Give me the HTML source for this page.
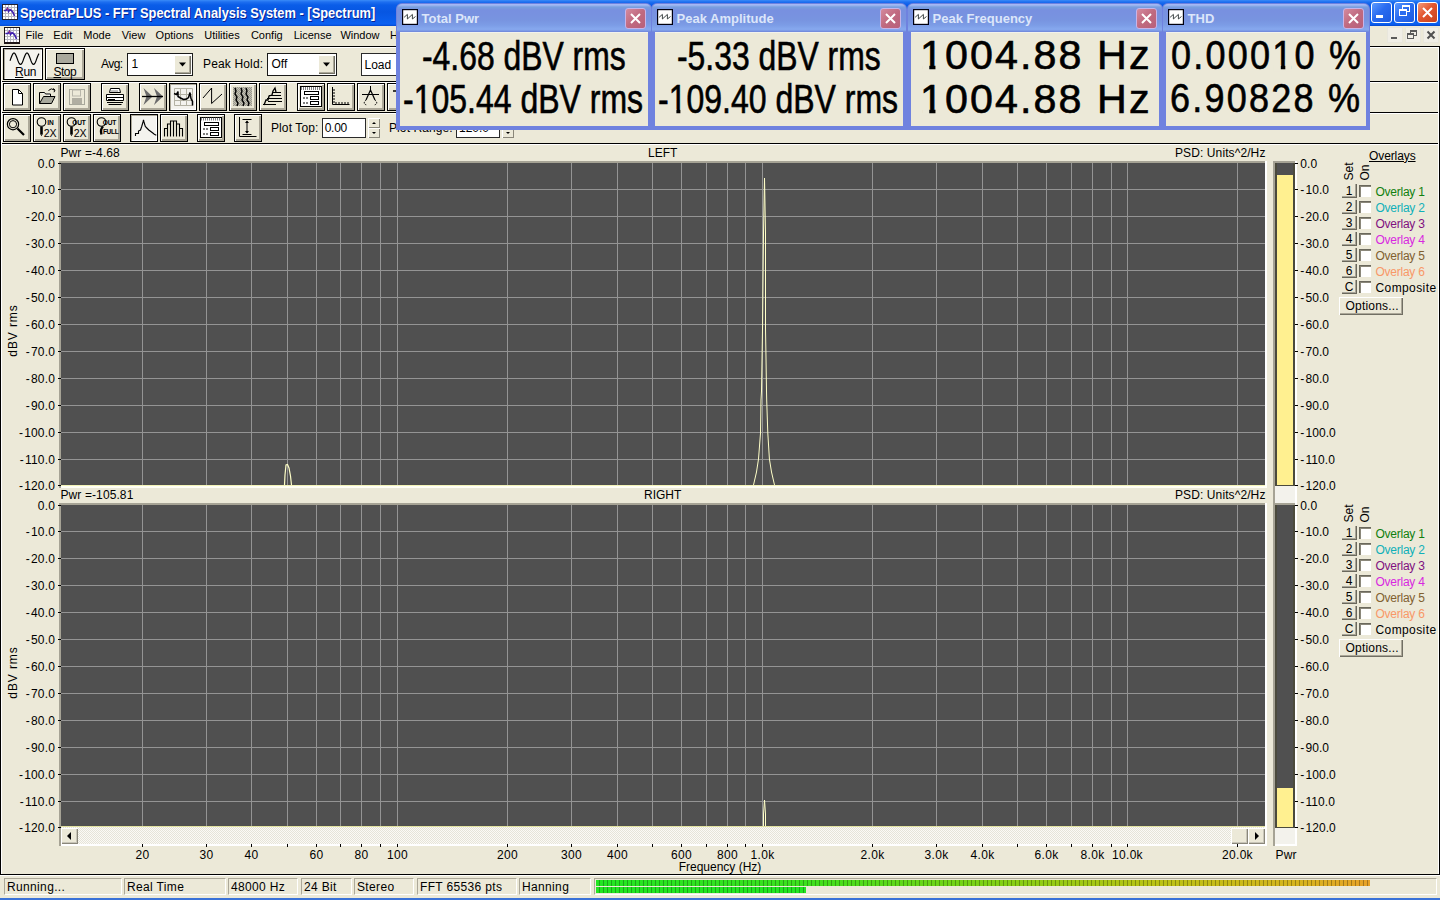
<!DOCTYPE html>
<html><head><meta charset="utf-8"><title>SpectraPLUS</title><style>
*{margin:0;padding:0;box-sizing:border-box}
html,body{width:1440px;height:900px;overflow:hidden}
body{background:#ECE9D8;font-family:"Liberation Sans",sans-serif;font-size:11px;color:#000;position:relative}
.a{position:absolute}
.t{position:absolute;white-space:nowrap}
.btn{position:absolute;border:1px solid #000;background:#ECE9D8;box-shadow:inset 1px 1px 0 #fff, inset -2px -2px 0 #ACA899}
.btnp{position:absolute;border:1px solid #000;background:#F4F3EE;box-shadow:inset 1px 1px 0 #ACA899, inset -1px -1px 0 #fff}
.sunk{position:absolute;background:#fff;border:1px solid #000}
.ico{position:absolute;left:0;top:0}
.one{position:relative}.one::before,.one::after{content:"";position:absolute;top:31.8px;height:6.5px;background:#ECE9D8}.one::before{left:1.5px;width:7.7px}.one::after{left:14.6px;width:7px}
</style></head><body>

<div class="a" style="left:0px;top:0px;width:1440px;height:26px;background:linear-gradient(#3A8CF8 0px,#1E6FF0 2px,#0A5DE8 5px,#0756E2 12px,#0A5FEE 22px,#0B60F2 24px,#0348D0 26px)"></div>
<svg class="a" style="left:2px;top:4px" width="16" height="16"><rect x="0.5" y="0.5" width="15" height="15" fill="#fff" stroke="#202030"/><path d="M3.5 1v14M6.5 1v14M9.5 1v14M12.5 1v14M1 3.5h14M1 6.5h14M1 9.5h14M1 12.5h14" stroke="#B8B8C0" stroke-width="1"/><path d="M2 6.5h2l1.5-2 1 3 1.5-2 1.5 1 1.5 2 1.5 3.5" stroke="#4020B0" stroke-width="1.6" fill="none"/><path d="M5 4l1 2" stroke="#C03060" stroke-width="1"/></svg>
<div class="t ttl" style="left:20px;top:5.95px;font-size:14px;line-height:14px;color:#fff;font-weight:bold;text-shadow:1px 1px 0 #0A2090;transform-origin:0 0;transform:scaleX(0.918)">SpectraPLUS - FFT Spectral Analysis System - [Spectrum]</div>
<div class="a" style="left:1371px;top:2px;width:21px;height:21px;border:1px solid #fff;border-radius:3px;background:linear-gradient(135deg,#5C9BFF,#2A6CF0 45%,#1C5AE0)"></div>
<div class="a" style="left:1376px;top:15px;width:7px;height:3px;background:#fff"></div>
<div class="a" style="left:1394px;top:2px;width:21px;height:21px;border:1px solid #fff;border-radius:3px;background:linear-gradient(135deg,#5C9BFF,#2A6CF0 45%,#1C5AE0)"></div>
<div class="a" style="left:1402px;top:5px;width:8px;height:7px;border:1px solid #fff;border-top-width:2px"></div>
<div class="a" style="left:1399px;top:9px;width:8px;height:7px;border:1px solid #fff;border-top-width:2px;background:#2A6CF0"></div>
<div class="a" style="left:1417px;top:2px;width:21px;height:21px;border:1px solid #fff;border-radius:3px;background:linear-gradient(135deg,#F39A7A,#E2562E 45%,#C8421E)"></div>
<svg class="a" style="left:1417px;top:2px" width="21" height="21"><path d="M6 6L15 15M15 6L6 15" stroke="#fff" stroke-width="2"/></svg>
<svg class="a" style="left:4px;top:27px" width="16" height="17"><rect x="0.5" y="0.5" width="15" height="15.5" fill="#fff" stroke="#201818"/><rect x="0" y="15" width="16" height="2" fill="#201818"/><path d="M3.5 1v14M6.5 1v14M9.5 1v14M12.5 1v14M1 3.5h14M1 6.5h14M1 9.5h14M1 12.5h14" stroke="#B8B8C0" stroke-width="1"/><path d="M1.5 6.5h2.5l1.5-2 1 3 1.5-2 1.5 1 1.5 2 1.5 3.5" stroke="#4020B0" stroke-width="1.6" fill="none"/><path d="M5 4l1 2" stroke="#C03060" stroke-width="1"/></svg>
<div class="t " style="left:25.6px;top:29.69px;font-size:11px;line-height:11px;">File</div>
<div class="t " style="left:53.3px;top:29.69px;font-size:11px;line-height:11px;">Edit</div>
<div class="t " style="left:83.3px;top:29.69px;font-size:11px;line-height:11px;">Mode</div>
<div class="t " style="left:121.7px;top:29.69px;font-size:11px;line-height:11px;">View</div>
<div class="t " style="left:155.6px;top:29.69px;font-size:11px;line-height:11px;">Options</div>
<div class="t " style="left:204.2px;top:29.69px;font-size:11px;line-height:11px;">Utilities</div>
<div class="t " style="left:250.9px;top:29.69px;font-size:11px;line-height:11px;">Config</div>
<div class="t " style="left:293.7px;top:29.69px;font-size:11px;line-height:11px;">License</div>
<div class="t " style="left:340.4px;top:29.69px;font-size:11px;line-height:11px;">Window</div>
<div class="t " style="left:390px;top:29.69px;font-size:11px;line-height:11px;">Help</div>
<div class="a" style="left:1387px;top:27px;width:16px;height:16px;border:1px solid #E8E6DC;background:#F0EEE6"></div>
<div class="a" style="left:1405px;top:27px;width:16px;height:16px;border:1px solid #E8E6DC;background:#F0EEE6"></div>
<div class="a" style="left:1423px;top:27px;width:16px;height:16px;border:1px solid #E8E6DC;background:#F0EEE6"></div>
<div class="a" style="left:1391px;top:37px;width:6px;height:2px;background:#5A5A5A"></div>
<div class="a" style="left:1410px;top:30px;width:7px;height:6px;border:1px solid #5A5A5A;border-top-width:2px"></div>
<div class="a" style="left:1407px;top:33px;width:7px;height:6px;border:1px solid #5A5A5A;border-top-width:2px;background:#F0EEE6"></div>
<svg class="a" style="left:1423px;top:27px" width="16" height="16"><path d="M4.5 4.5L11.5 11.5M11.5 4.5L4.5 11.5" stroke="#505050" stroke-width="2"/></svg>
<div class="a" style="left:0px;top:46px;width:1440px;height:1px;background:#000"></div>
<div class="a" style="left:0px;top:47px;width:1440px;height:1px;background:#fff"></div>
<div class="a" style="left:0px;top:81px;width:1440px;height:1px;background:#000"></div>
<div class="a" style="left:0px;top:82px;width:1440px;height:1px;background:#fff"></div>
<div class="a" style="left:0px;top:112px;width:1440px;height:1px;background:#000"></div>
<div class="a" style="left:0px;top:113px;width:1440px;height:1px;background:#fff"></div>
<div class="a" style="left:0px;top:143px;width:1440px;height:1px;background:#000"></div>
<div class="a" style="left:0px;top:144px;width:1440px;height:1px;background:#fff"></div>
<div class="a" style="left:0px;top:46px;width:1px;height:828px;background:#000"></div>
<div class="a" style="left:1439px;top:46px;width:1px;height:828px;background:#000"></div>
<div class="a" style="left:1438px;top:47px;width:1px;height:827px;background:#fff"></div>
<div class="a" style="left:1px;top:47px;width:1px;height:827px;background:#fff"></div>
<div class="btnp" style="left:3px;top:48px;width:40px;height:32px"></div>
<svg class="a" style="left:3px;top:48px" width="40" height="32"><path d="M7.00 12.72 L7.50 11.39 L8.00 10.01 L8.50 8.68 L9.00 7.46 L9.50 6.43 L10.00 5.65 L10.50 5.17 L11.00 5.00 L11.50 5.17 L12.00 5.65 L12.50 6.43 L13.00 7.46 L13.50 8.68 L14.00 10.01 L14.50 11.39 L15.00 12.72 L15.50 13.94 L16.00 14.97 L16.50 15.75 L17.00 16.23 L17.50 16.40 L18.00 16.23 L18.50 15.75 L19.00 14.97 L19.50 13.94 L20.00 12.72 L20.50 11.39 L21.00 10.01 L21.50 8.68 L22.00 7.46 L22.50 6.43 L23.00 5.65 L23.50 5.17 L24.00 5.00 L24.50 5.17 L25.00 5.65 L25.50 6.43 L26.00 7.46 L26.50 8.68 L27.00 10.01 L27.50 11.39 L28.00 12.72 L28.50 13.94 L29.00 14.97 L29.50 15.75 L30.00 16.23 L30.50 16.40 L31.00 16.23 L31.50 15.75 L32.00 14.97 L32.50 13.94 L33.00 12.72 L33.50 11.39 L34.00 10.01 L34.50 8.68 L35.00 7.46 L35.50 6.43 L36.00 5.65" stroke="#000" stroke-width="1.2" fill="none"/></svg>
<div class="t " style="left:15px;top:65.74px;font-size:12px;line-height:12px;letter-spacing:-0.3px"><u>R</u>un</div>
<div class="btn" style="left:45px;top:48px;width:40px;height:32px"></div>
<div class="a" style="left:56px;top:53px;width:18px;height:11px;background:#A9A89C;border:1px solid #000"></div>
<div class="t " style="left:53.5px;top:65.74px;font-size:12px;line-height:12px;letter-spacing:-0.5px"><u>S</u>top</div>
<div class="t " style="left:100.9px;top:57.74px;font-size:12px;line-height:12px;letter-spacing:-0.5px">Avg:</div>
<div class="a" style="left:127px;top:53px;width:66px;height:23px;background:#fff;border:1px solid #1A1A1A"></div>
<div class="a" style="left:174px;top:55px;width:17px;height:19px;background:#ECE9D8;box-shadow:inset 1px 1px 0 #fff,inset -1px -1px 0 #716F64,inset -2px -2px 0 #ACA899"></div>
<svg class="a" style="left:174px;top:55px" width="17" height="19"><path d="M5 7.5h7l-3.5 4z" fill="#000"/></svg>
<div class="t " style="left:131.5px;top:58.34px;font-size:12px;line-height:12px;">1</div>
<div class="t " style="left:203px;top:57.74px;font-size:12px;line-height:12px;letter-spacing:0.15px">Peak Hold:</div>
<div class="a" style="left:267px;top:53px;width:70px;height:23px;background:#fff;border:1px solid #1A1A1A"></div>
<div class="a" style="left:318px;top:55px;width:17px;height:19px;background:#ECE9D8;box-shadow:inset 1px 1px 0 #fff,inset -1px -1px 0 #716F64,inset -2px -2px 0 #ACA899"></div>
<svg class="a" style="left:318px;top:55px" width="17" height="19"><path d="M5 7.5h7l-3.5 4z" fill="#000"/></svg>
<div class="t " style="left:271.5px;top:58.34px;font-size:12px;line-height:12px;">Off</div>
<div class="a" style="left:361px;top:53px;width:60px;height:23px;background:#fff;border:1px solid #2A2A2A"></div>
<div class="t " style="left:364.5px;top:58.84px;font-size:12px;line-height:12px;letter-spacing:0px">Load</div>
<div class="btn" style="left:3px;top:83px;width:28px;height:28px"></div>
<svg class="a" style="left:3px;top:83px" width="28" height="28"><path d="M9.5 6.5h6l4 4v11.5h-10z" fill="#fff" stroke="#000"/><path d="M15.5 6.5v4h4" fill="none" stroke="#000"/></svg>
<div class="btn" style="left:33px;top:83px;width:28px;height:28px"></div>
<svg class="a" style="left:33px;top:83px" width="28" height="28"><path d="M6.5 9.5h5l1 1.5h5v2" fill="#fff" stroke="#000"/><path d="M6.5 9.5v11h12l3.5-7h-11.5l-4 7" fill="#A8A89C" stroke="#000"/><path d="M15.5 7.5q2.5-3 6 -0.5" stroke="#000" fill="none"/><path d="M20 5.5l2 1.5-1 2.2" stroke="#000" fill="none"/></svg>
<div class="btn" style="left:63px;top:83px;width:28px;height:28px"></div>
<svg class="a" style="left:63px;top:83px" width="28" height="28"><rect x="6.5" y="6.5" width="15" height="15" fill="none" stroke="#A8A89C"/><rect x="9.5" y="7" width="8" height="6" fill="none" stroke="#B8B6AA"/><rect x="9" y="15" width="10" height="6" fill="#B0AEA2"/></svg>
<div class="btn" style="left:101px;top:83px;width:28px;height:28px"></div>
<svg class="a" style="left:101px;top:83px" width="28" height="28"><path d="M9.5 5.5h9l1 4h-11z" fill="#fff" stroke="#000"/><path d="M5.5 11.5h17v6h-17z" fill="#fff" stroke="#000"/><path d="M5.5 14.5h17M6 19.5h16M7.5 21.5h13" stroke="#000"/><rect x="7" y="16" width="7" height="1.5" fill="#000"/><path d="M10 8h7" stroke="#888"/></svg>
<div class="btn" style="left:139px;top:83px;width:28px;height:28px"></div>
<svg class="a" style="left:139px;top:83px" width="28" height="28"><defs><pattern id="dthx" width="2" height="2" patternUnits="userSpaceOnUse"><rect width="1" height="1" fill="#000"/><rect x="1" y="1" width="1" height="1" fill="#000"/><rect x="1" y="0" width="1" height="1" fill="#777"/><rect x="0" y="1" width="1" height="1" fill="#777"/></pattern></defs><path d="M4.5 5L13.5 13.5L4.5 22L7.5 13.5z" fill="#6A6A6A"/><path d="M15 5L24 13.5L15 22L18 13.5z" fill="#6A6A6A"/><path d="M3 13.5h21" stroke="#000" stroke-width="1.3"/></svg>
<div class="btnp" style="left:169px;top:83px;width:28px;height:28px"></div>
<svg class="a" style="left:169px;top:83px" width="28" height="28"><path d="M5.5 5.5h18v17h-18zM11.5 5v18M17.5 5v18M5 11.5h19M5 17.5h19" stroke="#B4B2A4" fill="none"/><path d="M5 10.5l2.5 1 1.5-3v5l2.5 1.5 3 1.5 3-0.5 2-1.5 1.5-5 1 6 1.5 3v4" stroke="#000" stroke-width="1.5" fill="none"/></svg>
<div class="btn" style="left:199px;top:83px;width:28px;height:28px"></div>
<svg class="a" style="left:199px;top:83px" width="28" height="28"><path d="M4 15L12.6 5V20.5L23 11" stroke="#000" fill="none"/></svg>
<div class="btn" style="left:229px;top:83px;width:28px;height:28px"></div>
<svg class="a" style="left:229px;top:83px" width="28" height="28"><defs><pattern id="dt2" width="2" height="2" patternUnits="userSpaceOnUse"><rect width="2" height="2" fill="#C4C2B6"/><rect width="1" height="1" fill="#9A988C"/><rect x="1" y="1" width="1" height="1" fill="#9A988C"/></pattern></defs><rect x="4" y="4" width="19" height="19" fill="url(#dt2)"/><path d="M6 5l1 3-1 3 2 3-1 3 2 3-1 3M12 5l1 3-1 3 2 3-1 3 2 3-1 3M17 5l1 3-1 3 2 3-1 3 2 3-1 3" stroke="#000" stroke-width="1.4" fill="none"/></svg>
<div class="btn" style="left:259px;top:83px;width:28px;height:28px"></div>
<svg class="a" style="left:259px;top:83px" width="28" height="28"><path d="M9 18.5h14M8 15.5h15M10 12.5h12M13 9.5h9M4 21.5h13" stroke="#000" stroke-width="1.2"/><path d="M5 22l2-5 2 0 1-4 3-1 1-4 2-3 1 4" stroke="#000" fill="none" stroke-width="1.3"/></svg>
<div class="btn" style="left:297px;top:83px;width:28px;height:28px"></div>
<svg class="a" style="left:297px;top:83px" width="28" height="28"><rect x="3.5" y="3.5" width="21" height="20" fill="#fff" stroke="#000"/><path d="M4 5.5h20" stroke="#808080" stroke-width="3" stroke-dasharray="1 1"/><rect x="7.5" y="8.5" width="14" height="3" fill="none" stroke="#000"/><rect x="13.5" y="13.5" width="8" height="3" fill="none" stroke="#000"/><rect x="13.5" y="18.5" width="8" height="3" fill="none" stroke="#000"/><path d="M6 15h2M9 15h2M6 20h2M9 20h2" stroke="#000"/></svg>
<div class="btn" style="left:327px;top:83px;width:28px;height:28px"></div>
<svg class="a" style="left:327px;top:83px" width="28" height="28"><path d="M5.5 4v17.5h17" stroke="#000" fill="none"/><path d="M6 7h2M6 10h2M6 13h2M6 16h2M6 19h2M9 21v-2M12 21v-2M15 21v-2M18 21v-2M21 21v-2" stroke="#000"/></svg>
<div class="btn" style="left:357px;top:83px;width:28px;height:28px"></div>
<svg class="a" style="left:357px;top:83px" width="28" height="28"><path d="M13.5 3v6M5 11.5h17" stroke="#000" fill="none"/><path d="M13.5 7L9 17M13.5 7L18 17" stroke="#000" fill="none" stroke-width="1.2"/><path d="M9 17q-4 4 1 5M18 17q4 4-1 5" stroke="#000" fill="none" stroke-dasharray="1.5 1"/></svg>
<div class="btn" style="left:387px;top:83px;width:28px;height:28px"></div>
<svg class="a" style="left:387px;top:83px" width="28" height="28"><path d="M6 8h10M11 8v12M9 20h4" stroke="#000" fill="none" stroke-width="1.3"/></svg>
<div class="btn" style="left:3px;top:114px;width:28px;height:28px"></div>
<svg class="a" style="left:3px;top:114px" width="28" height="28"><circle cx="10" cy="10.2" r="5.6" stroke="#000" fill="none" stroke-width="1.2"/><circle cx="10" cy="10.2" r="3.6" stroke="#000" fill="none"/><path d="M14.5 14.5l6.5 6.5" stroke="#000" stroke-width="2.2"/></svg>
<div class="btn" style="left:33px;top:114px;width:28px;height:28px"></div>
<svg class="a" style="left:33px;top:114px" width="28" height="28"><circle cx="8.5" cy="8" r="4.3" stroke="#000" fill="none" stroke-width="1.1"/><path d="M8.5 12.5v8" stroke="#000" stroke-width="2.6"/><path d="M7.5 20.5l1 1.8 1-1.8z" fill="#000"/><text x="14.2" y="11.2" font-size="6.6" font-family="Liberation Sans" font-weight="bold">IN</text><text x="11.8" y="22.8" font-size="11.5" font-family="Liberation Sans" transform="scale(0.92 1)" style="letter-spacing:-0.3px">2X</text></svg>
<div class="btn" style="left:63px;top:114px;width:28px;height:28px"></div>
<svg class="a" style="left:63px;top:114px" width="28" height="28"><circle cx="8.5" cy="8" r="4.3" stroke="#000" fill="none" stroke-width="1.1"/><path d="M8.5 12.5v8" stroke="#000" stroke-width="2.6"/><path d="M7.5 20.5l1 1.8 1-1.8z" fill="#000"/><text x="9.3" y="11.2" font-size="6.6" font-family="Liberation Sans" font-weight="bold" style="letter-spacing:-0.2px">OUT</text><text x="11.8" y="22.8" font-size="11.5" font-family="Liberation Sans" transform="scale(0.92 1)" style="letter-spacing:-0.3px">2X</text></svg>
<div class="btn" style="left:93px;top:114px;width:28px;height:28px"></div>
<svg class="a" style="left:93px;top:114px" width="28" height="28"><circle cx="8.5" cy="8" r="4.3" stroke="#000" fill="none" stroke-width="1.1"/><path d="M10 12.5q-3 3-1.5 8" stroke="#000" stroke-width="2.4" fill="none"/><text x="9.8" y="11.2" font-size="6.6" font-family="Liberation Sans" font-weight="bold" style="letter-spacing:-0.2px">OUT</text><text x="9.9" y="20.2" font-size="6.6" font-family="Liberation Sans" font-weight="bold" style="letter-spacing:-0.3px">FULL</text></svg>
<div class="btnp" style="left:130px;top:114px;width:28px;height:28px"></div>
<svg class="a" style="left:130px;top:114px" width="28" height="28"><path d="M5.5 22v-2.5h3v-2.5l2-1 1.2-3.5 1.3-4.5 0.5-2 0.5 2 1.3 4.5 2 2 1.5 1.5 2 1.5 2 1.5 1.5 1.2 2 1" stroke="#000" fill="none" stroke-width="1.1"/></svg>
<div class="btn" style="left:160px;top:114px;width:28px;height:28px"></div>
<svg class="a" style="left:160px;top:114px" width="28" height="28"><path d="M4.5 22.5v-8h3v8M7.5 14.5v-4.5h3v12.5M10.5 10v-3h3v15.5M13.5 7h3v15.5M16.5 10h3v12.5M19.5 14.5h3v8" stroke="#000" fill="none" stroke-width="1.1"/></svg>
<div class="btn" style="left:197px;top:114px;width:28px;height:28px"></div>
<svg class="a" style="left:197px;top:114px" width="28" height="28"><rect x="3.5" y="3.5" width="21" height="20" fill="#fff" stroke="#000"/><path d="M4 5.2h20" stroke="#808080" stroke-width="2.8" stroke-dasharray="1 1"/><rect x="7.5" y="8.5" width="14" height="3" fill="none" stroke="#000"/><rect x="13.5" y="13.5" width="8" height="3" fill="none" stroke="#000"/><rect x="13.5" y="18.5" width="8" height="3" fill="none" stroke="#000"/><path d="M6 15h2M9 15h2M6 20h2M9 20h2" stroke="#000"/></svg>
<div class="btn" style="left:234px;top:114px;width:28px;height:28px"></div>
<svg class="a" style="left:234px;top:114px" width="28" height="28"><path d="M5.5 3v19.5h17" stroke="#000" fill="none"/><path d="M8.5 5.5h9M8.5 20.5h9M13 7v12" stroke="#000"/><path d="M11 9l2-2.5 2 2.5zM11 17l2 2.5 2-2.5z" fill="#000"/></svg>
<div class="t " style="left:271px;top:122.44px;font-size:12px;line-height:12px;letter-spacing:0.1px">Plot Top:</div>
<div class="a" style="left:322px;top:118px;width:44px;height:20px;background:#fff;border:1px solid #2A2A2A"></div>
<div class="t " style="left:324.7px;top:121.64px;font-size:12px;line-height:12px;letter-spacing:-0.25px">0.00</div>
<div class="a" style="left:368px;top:118px;width:12px;height:10px;background:#ECE9D8;box-shadow:inset 1px 1px 0 #fff,inset -1px -1px 0 #8A877A"></div>
<div class="a" style="left:368px;top:128px;width:12px;height:10px;background:#ECE9D8;box-shadow:inset 1px 1px 0 #fff,inset -1px -1px 0 #8A877A"></div>
<svg class="a" style="left:368px;top:118px" width="12" height="20"><path d="M4 6h4l-2-2zM4 14h4l-2 2z" fill="#000"/></svg>
<div class="t " style="left:389px;top:122.44px;font-size:12px;line-height:12px;letter-spacing:0.1px">Plot Range:</div>
<div class="a" style="left:456px;top:118px;width:44px;height:20px;background:#fff;border:1px solid #2A2A2A"></div>
<div class="t " style="left:459px;top:121.64px;font-size:12px;line-height:12px;">120.0</div>
<div class="a" style="left:502px;top:118px;width:12px;height:10px;background:#ECE9D8;box-shadow:inset 1px 1px 0 #fff,inset -1px -1px 0 #8A877A"></div>
<div class="a" style="left:502px;top:128px;width:12px;height:10px;background:#ECE9D8;box-shadow:inset 1px 1px 0 #fff,inset -1px -1px 0 #8A877A"></div>
<svg class="a" style="left:502px;top:118px" width="12" height="20"><path d="M4 6h4l-2-2zM4 14h4l-2 2z" fill="#000"/></svg>
<div class="a" style="left:1273px;top:161px;width:24px;height:685px;background:#F3F2EC"></div>
<div class="a" style="left:1273px;top:161px;width:2px;height:685px;background:#A6A395"></div>
<div class="a" style="left:1295px;top:161px;width:2px;height:685px;background:#fff"></div>
<div class="a" style="left:1275px;top:844px;width:20px;height:2px;background:#fff"></div>
<div class="a" style="left:59px;top:161px;width:1208px;height:327px;background:#fff"></div>
<div class="a" style="left:59px;top:161px;width:2px;height:327px;background:#A6A395"></div>
<div class="a" style="left:59px;top:161px;width:1206px;height:2px;background:#A6A395"></div>
<div class="a" style="left:61px;top:163px;width:1204px;height:322px;background:#505050"></div>
<div class="a" style="left:61px;top:189px;width:1204px;height:1px;background:#949494"></div>
<div class="a" style="left:61px;top:216px;width:1204px;height:1px;background:#949494"></div>
<div class="a" style="left:61px;top:243px;width:1204px;height:1px;background:#949494"></div>
<div class="a" style="left:61px;top:270px;width:1204px;height:1px;background:#949494"></div>
<div class="a" style="left:61px;top:297px;width:1204px;height:1px;background:#949494"></div>
<div class="a" style="left:61px;top:324px;width:1204px;height:1px;background:#949494"></div>
<div class="a" style="left:61px;top:351px;width:1204px;height:1px;background:#949494"></div>
<div class="a" style="left:61px;top:378px;width:1204px;height:1px;background:#949494"></div>
<div class="a" style="left:61px;top:405px;width:1204px;height:1px;background:#949494"></div>
<div class="a" style="left:61px;top:432px;width:1204px;height:1px;background:#949494"></div>
<div class="a" style="left:61px;top:459px;width:1204px;height:1px;background:#949494"></div>
<div class="a" style="left:142px;top:163px;width:1px;height:322px;background:#949494"></div>
<div class="a" style="left:206px;top:163px;width:1px;height:322px;background:#949494"></div>
<div class="a" style="left:251px;top:163px;width:1px;height:322px;background:#949494"></div>
<div class="a" style="left:287px;top:163px;width:1px;height:322px;background:#949494"></div>
<div class="a" style="left:316px;top:163px;width:1px;height:322px;background:#949494"></div>
<div class="a" style="left:340px;top:163px;width:1px;height:322px;background:#949494"></div>
<div class="a" style="left:361px;top:163px;width:1px;height:322px;background:#949494"></div>
<div class="a" style="left:380px;top:163px;width:1px;height:322px;background:#949494"></div>
<div class="a" style="left:397px;top:163px;width:1px;height:322px;background:#949494"></div>
<div class="a" style="left:507px;top:163px;width:1px;height:322px;background:#949494"></div>
<div class="a" style="left:571px;top:163px;width:1px;height:322px;background:#949494"></div>
<div class="a" style="left:617px;top:163px;width:1px;height:322px;background:#949494"></div>
<div class="a" style="left:652px;top:163px;width:1px;height:322px;background:#949494"></div>
<div class="a" style="left:681px;top:163px;width:1px;height:322px;background:#949494"></div>
<div class="a" style="left:706px;top:163px;width:1px;height:322px;background:#949494"></div>
<div class="a" style="left:727px;top:163px;width:1px;height:322px;background:#949494"></div>
<div class="a" style="left:745px;top:163px;width:1px;height:322px;background:#949494"></div>
<div class="a" style="left:762px;top:163px;width:1px;height:322px;background:#949494"></div>
<div class="a" style="left:872px;top:163px;width:1px;height:322px;background:#949494"></div>
<div class="a" style="left:936px;top:163px;width:1px;height:322px;background:#949494"></div>
<div class="a" style="left:982px;top:163px;width:1px;height:322px;background:#949494"></div>
<div class="a" style="left:1017px;top:163px;width:1px;height:322px;background:#949494"></div>
<div class="a" style="left:1046px;top:163px;width:1px;height:322px;background:#949494"></div>
<div class="a" style="left:1071px;top:163px;width:1px;height:322px;background:#949494"></div>
<div class="a" style="left:1092px;top:163px;width:1px;height:322px;background:#949494"></div>
<div class="a" style="left:1111px;top:163px;width:1px;height:322px;background:#949494"></div>
<div class="a" style="left:1127px;top:163px;width:1px;height:322px;background:#949494"></div>
<div class="a" style="left:1237px;top:163px;width:1px;height:322px;background:#949494"></div>
<div class="t" style="right:1385px;top:157.54px;font-size:12px;line-height:12px;letter-spacing:0.15px">0.0</div>
<div class="a" style="left:58px;top:163px;width:3px;height:1px;background:#000"></div>
<div class="t " style="left:1300.3px;top:157.54px;font-size:12px;line-height:12px;letter-spacing:0.05px">0.0</div>
<div class="a" style="left:1295px;top:163px;width:3px;height:1px;background:#000"></div>
<div class="t" style="right:1385px;top:183.54px;font-size:12px;line-height:12px;letter-spacing:0.15px">-<span style="margin-left:1.2px"></span>10.0</div>
<div class="a" style="left:58px;top:189px;width:3px;height:1px;background:#000"></div>
<div class="t " style="left:1300.3px;top:183.54px;font-size:12px;line-height:12px;letter-spacing:0.05px">-<span style="margin-left:1.2px"></span>10.0</div>
<div class="a" style="left:1295px;top:189px;width:3px;height:1px;background:#000"></div>
<div class="t" style="right:1385px;top:210.54px;font-size:12px;line-height:12px;letter-spacing:0.15px">-<span style="margin-left:1.2px"></span>20.0</div>
<div class="a" style="left:58px;top:216px;width:3px;height:1px;background:#000"></div>
<div class="t " style="left:1300.3px;top:210.54px;font-size:12px;line-height:12px;letter-spacing:0.05px">-<span style="margin-left:1.2px"></span>20.0</div>
<div class="a" style="left:1295px;top:216px;width:3px;height:1px;background:#000"></div>
<div class="t" style="right:1385px;top:237.54px;font-size:12px;line-height:12px;letter-spacing:0.15px">-<span style="margin-left:1.2px"></span>30.0</div>
<div class="a" style="left:58px;top:243px;width:3px;height:1px;background:#000"></div>
<div class="t " style="left:1300.3px;top:237.54px;font-size:12px;line-height:12px;letter-spacing:0.05px">-<span style="margin-left:1.2px"></span>30.0</div>
<div class="a" style="left:1295px;top:243px;width:3px;height:1px;background:#000"></div>
<div class="t" style="right:1385px;top:264.54px;font-size:12px;line-height:12px;letter-spacing:0.15px">-<span style="margin-left:1.2px"></span>40.0</div>
<div class="a" style="left:58px;top:270px;width:3px;height:1px;background:#000"></div>
<div class="t " style="left:1300.3px;top:264.54px;font-size:12px;line-height:12px;letter-spacing:0.05px">-<span style="margin-left:1.2px"></span>40.0</div>
<div class="a" style="left:1295px;top:270px;width:3px;height:1px;background:#000"></div>
<div class="t" style="right:1385px;top:291.54px;font-size:12px;line-height:12px;letter-spacing:0.15px">-<span style="margin-left:1.2px"></span>50.0</div>
<div class="a" style="left:58px;top:297px;width:3px;height:1px;background:#000"></div>
<div class="t " style="left:1300.3px;top:291.54px;font-size:12px;line-height:12px;letter-spacing:0.05px">-<span style="margin-left:1.2px"></span>50.0</div>
<div class="a" style="left:1295px;top:297px;width:3px;height:1px;background:#000"></div>
<div class="t" style="right:1385px;top:318.54px;font-size:12px;line-height:12px;letter-spacing:0.15px">-<span style="margin-left:1.2px"></span>60.0</div>
<div class="a" style="left:58px;top:324px;width:3px;height:1px;background:#000"></div>
<div class="t " style="left:1300.3px;top:318.54px;font-size:12px;line-height:12px;letter-spacing:0.05px">-<span style="margin-left:1.2px"></span>60.0</div>
<div class="a" style="left:1295px;top:324px;width:3px;height:1px;background:#000"></div>
<div class="t" style="right:1385px;top:345.54px;font-size:12px;line-height:12px;letter-spacing:0.15px">-<span style="margin-left:1.2px"></span>70.0</div>
<div class="a" style="left:58px;top:351px;width:3px;height:1px;background:#000"></div>
<div class="t " style="left:1300.3px;top:345.54px;font-size:12px;line-height:12px;letter-spacing:0.05px">-<span style="margin-left:1.2px"></span>70.0</div>
<div class="a" style="left:1295px;top:351px;width:3px;height:1px;background:#000"></div>
<div class="t" style="right:1385px;top:372.54px;font-size:12px;line-height:12px;letter-spacing:0.15px">-<span style="margin-left:1.2px"></span>80.0</div>
<div class="a" style="left:58px;top:378px;width:3px;height:1px;background:#000"></div>
<div class="t " style="left:1300.3px;top:372.54px;font-size:12px;line-height:12px;letter-spacing:0.05px">-<span style="margin-left:1.2px"></span>80.0</div>
<div class="a" style="left:1295px;top:378px;width:3px;height:1px;background:#000"></div>
<div class="t" style="right:1385px;top:399.54px;font-size:12px;line-height:12px;letter-spacing:0.15px">-<span style="margin-left:1.2px"></span>90.0</div>
<div class="a" style="left:58px;top:405px;width:3px;height:1px;background:#000"></div>
<div class="t " style="left:1300.3px;top:399.54px;font-size:12px;line-height:12px;letter-spacing:0.05px">-<span style="margin-left:1.2px"></span>90.0</div>
<div class="a" style="left:1295px;top:405px;width:3px;height:1px;background:#000"></div>
<div class="t" style="right:1385px;top:426.54px;font-size:12px;line-height:12px;letter-spacing:0.15px">-<span style="margin-left:1.2px"></span>100.0</div>
<div class="a" style="left:58px;top:432px;width:3px;height:1px;background:#000"></div>
<div class="t " style="left:1300.3px;top:426.54px;font-size:12px;line-height:12px;letter-spacing:0.05px">-<span style="margin-left:1.2px"></span>100.0</div>
<div class="a" style="left:1295px;top:432px;width:3px;height:1px;background:#000"></div>
<div class="t" style="right:1385px;top:453.54px;font-size:12px;line-height:12px;letter-spacing:0.15px">-<span style="margin-left:1.2px"></span>110.0</div>
<div class="a" style="left:58px;top:459px;width:3px;height:1px;background:#000"></div>
<div class="t " style="left:1300.3px;top:453.54px;font-size:12px;line-height:12px;letter-spacing:0.05px">-<span style="margin-left:1.2px"></span>110.0</div>
<div class="a" style="left:1295px;top:459px;width:3px;height:1px;background:#000"></div>
<div class="t" style="right:1385px;top:479.54px;font-size:12px;line-height:12px;letter-spacing:0.15px">-<span style="margin-left:1.2px"></span>120.0</div>
<div class="a" style="left:58px;top:485px;width:3px;height:1px;background:#000"></div>
<div class="t " style="left:1300.3px;top:479.54px;font-size:12px;line-height:12px;letter-spacing:0.05px">-<span style="margin-left:1.2px"></span>120.0</div>
<div class="a" style="left:1295px;top:485px;width:3px;height:1px;background:#000"></div>
<div class="t " style="left:60.5px;top:147.24px;font-size:12px;line-height:12px;letter-spacing:0.1px">Pwr =-4.68</div>
<div class="t" style="left:562.7px;width:200px;text-align:center;top:146.74px;font-size:12px;line-height:12px;">LEFT</div>
<div class="t" style="right:174.5px;top:147.24px;font-size:12px;line-height:12px;letter-spacing:0.1px">PSD: Units^2/Hz</div>
<div class="a" style="left:1275px;top:163px;width:20px;height:323px;background:#505050;border-left:2px solid #4B4A3C;border-right:2px solid #4B4A3C;border-bottom:1px solid #4B4A3C"></div>
<div class="a" style="left:1277px;top:175px;width:16px;height:310px;background:#FFF090"></div>
<div class="t" style="left:-26.6px;top:323.5px;width:80px;height:13px;line-height:13px;font-size:12px;text-align:center;transform:rotate(-90deg);letter-spacing:0.9px">dBV rms</div>
<div class="a" style="left:59px;top:503px;width:1208px;height:343px;background:#fff"></div>
<div class="a" style="left:59px;top:503px;width:2px;height:343px;background:#A6A395"></div>
<div class="a" style="left:59px;top:503px;width:1206px;height:2px;background:#A6A395"></div>
<div class="a" style="left:61px;top:505px;width:1204px;height:322px;background:#505050"></div>
<div class="a" style="left:61px;top:531px;width:1204px;height:1px;background:#949494"></div>
<div class="a" style="left:61px;top:558px;width:1204px;height:1px;background:#949494"></div>
<div class="a" style="left:61px;top:585px;width:1204px;height:1px;background:#949494"></div>
<div class="a" style="left:61px;top:612px;width:1204px;height:1px;background:#949494"></div>
<div class="a" style="left:61px;top:639px;width:1204px;height:1px;background:#949494"></div>
<div class="a" style="left:61px;top:666px;width:1204px;height:1px;background:#949494"></div>
<div class="a" style="left:61px;top:693px;width:1204px;height:1px;background:#949494"></div>
<div class="a" style="left:61px;top:720px;width:1204px;height:1px;background:#949494"></div>
<div class="a" style="left:61px;top:747px;width:1204px;height:1px;background:#949494"></div>
<div class="a" style="left:61px;top:774px;width:1204px;height:1px;background:#949494"></div>
<div class="a" style="left:61px;top:801px;width:1204px;height:1px;background:#949494"></div>
<div class="a" style="left:142px;top:505px;width:1px;height:322px;background:#949494"></div>
<div class="a" style="left:206px;top:505px;width:1px;height:322px;background:#949494"></div>
<div class="a" style="left:251px;top:505px;width:1px;height:322px;background:#949494"></div>
<div class="a" style="left:287px;top:505px;width:1px;height:322px;background:#949494"></div>
<div class="a" style="left:316px;top:505px;width:1px;height:322px;background:#949494"></div>
<div class="a" style="left:340px;top:505px;width:1px;height:322px;background:#949494"></div>
<div class="a" style="left:361px;top:505px;width:1px;height:322px;background:#949494"></div>
<div class="a" style="left:380px;top:505px;width:1px;height:322px;background:#949494"></div>
<div class="a" style="left:397px;top:505px;width:1px;height:322px;background:#949494"></div>
<div class="a" style="left:507px;top:505px;width:1px;height:322px;background:#949494"></div>
<div class="a" style="left:571px;top:505px;width:1px;height:322px;background:#949494"></div>
<div class="a" style="left:617px;top:505px;width:1px;height:322px;background:#949494"></div>
<div class="a" style="left:652px;top:505px;width:1px;height:322px;background:#949494"></div>
<div class="a" style="left:681px;top:505px;width:1px;height:322px;background:#949494"></div>
<div class="a" style="left:706px;top:505px;width:1px;height:322px;background:#949494"></div>
<div class="a" style="left:727px;top:505px;width:1px;height:322px;background:#949494"></div>
<div class="a" style="left:745px;top:505px;width:1px;height:322px;background:#949494"></div>
<div class="a" style="left:762px;top:505px;width:1px;height:322px;background:#949494"></div>
<div class="a" style="left:872px;top:505px;width:1px;height:322px;background:#949494"></div>
<div class="a" style="left:936px;top:505px;width:1px;height:322px;background:#949494"></div>
<div class="a" style="left:982px;top:505px;width:1px;height:322px;background:#949494"></div>
<div class="a" style="left:1017px;top:505px;width:1px;height:322px;background:#949494"></div>
<div class="a" style="left:1046px;top:505px;width:1px;height:322px;background:#949494"></div>
<div class="a" style="left:1071px;top:505px;width:1px;height:322px;background:#949494"></div>
<div class="a" style="left:1092px;top:505px;width:1px;height:322px;background:#949494"></div>
<div class="a" style="left:1111px;top:505px;width:1px;height:322px;background:#949494"></div>
<div class="a" style="left:1127px;top:505px;width:1px;height:322px;background:#949494"></div>
<div class="a" style="left:1237px;top:505px;width:1px;height:322px;background:#949494"></div>
<div class="t" style="right:1385px;top:499.54px;font-size:12px;line-height:12px;letter-spacing:0.15px">0.0</div>
<div class="a" style="left:58px;top:505px;width:3px;height:1px;background:#000"></div>
<div class="t " style="left:1300.3px;top:499.54px;font-size:12px;line-height:12px;letter-spacing:0.05px">0.0</div>
<div class="a" style="left:1295px;top:505px;width:3px;height:1px;background:#000"></div>
<div class="t" style="right:1385px;top:525.54px;font-size:12px;line-height:12px;letter-spacing:0.15px">-<span style="margin-left:1.2px"></span>10.0</div>
<div class="a" style="left:58px;top:531px;width:3px;height:1px;background:#000"></div>
<div class="t " style="left:1300.3px;top:525.54px;font-size:12px;line-height:12px;letter-spacing:0.05px">-<span style="margin-left:1.2px"></span>10.0</div>
<div class="a" style="left:1295px;top:531px;width:3px;height:1px;background:#000"></div>
<div class="t" style="right:1385px;top:552.54px;font-size:12px;line-height:12px;letter-spacing:0.15px">-<span style="margin-left:1.2px"></span>20.0</div>
<div class="a" style="left:58px;top:558px;width:3px;height:1px;background:#000"></div>
<div class="t " style="left:1300.3px;top:552.54px;font-size:12px;line-height:12px;letter-spacing:0.05px">-<span style="margin-left:1.2px"></span>20.0</div>
<div class="a" style="left:1295px;top:558px;width:3px;height:1px;background:#000"></div>
<div class="t" style="right:1385px;top:579.54px;font-size:12px;line-height:12px;letter-spacing:0.15px">-<span style="margin-left:1.2px"></span>30.0</div>
<div class="a" style="left:58px;top:585px;width:3px;height:1px;background:#000"></div>
<div class="t " style="left:1300.3px;top:579.54px;font-size:12px;line-height:12px;letter-spacing:0.05px">-<span style="margin-left:1.2px"></span>30.0</div>
<div class="a" style="left:1295px;top:585px;width:3px;height:1px;background:#000"></div>
<div class="t" style="right:1385px;top:606.54px;font-size:12px;line-height:12px;letter-spacing:0.15px">-<span style="margin-left:1.2px"></span>40.0</div>
<div class="a" style="left:58px;top:612px;width:3px;height:1px;background:#000"></div>
<div class="t " style="left:1300.3px;top:606.54px;font-size:12px;line-height:12px;letter-spacing:0.05px">-<span style="margin-left:1.2px"></span>40.0</div>
<div class="a" style="left:1295px;top:612px;width:3px;height:1px;background:#000"></div>
<div class="t" style="right:1385px;top:633.54px;font-size:12px;line-height:12px;letter-spacing:0.15px">-<span style="margin-left:1.2px"></span>50.0</div>
<div class="a" style="left:58px;top:639px;width:3px;height:1px;background:#000"></div>
<div class="t " style="left:1300.3px;top:633.54px;font-size:12px;line-height:12px;letter-spacing:0.05px">-<span style="margin-left:1.2px"></span>50.0</div>
<div class="a" style="left:1295px;top:639px;width:3px;height:1px;background:#000"></div>
<div class="t" style="right:1385px;top:660.54px;font-size:12px;line-height:12px;letter-spacing:0.15px">-<span style="margin-left:1.2px"></span>60.0</div>
<div class="a" style="left:58px;top:666px;width:3px;height:1px;background:#000"></div>
<div class="t " style="left:1300.3px;top:660.54px;font-size:12px;line-height:12px;letter-spacing:0.05px">-<span style="margin-left:1.2px"></span>60.0</div>
<div class="a" style="left:1295px;top:666px;width:3px;height:1px;background:#000"></div>
<div class="t" style="right:1385px;top:687.54px;font-size:12px;line-height:12px;letter-spacing:0.15px">-<span style="margin-left:1.2px"></span>70.0</div>
<div class="a" style="left:58px;top:693px;width:3px;height:1px;background:#000"></div>
<div class="t " style="left:1300.3px;top:687.54px;font-size:12px;line-height:12px;letter-spacing:0.05px">-<span style="margin-left:1.2px"></span>70.0</div>
<div class="a" style="left:1295px;top:693px;width:3px;height:1px;background:#000"></div>
<div class="t" style="right:1385px;top:714.54px;font-size:12px;line-height:12px;letter-spacing:0.15px">-<span style="margin-left:1.2px"></span>80.0</div>
<div class="a" style="left:58px;top:720px;width:3px;height:1px;background:#000"></div>
<div class="t " style="left:1300.3px;top:714.54px;font-size:12px;line-height:12px;letter-spacing:0.05px">-<span style="margin-left:1.2px"></span>80.0</div>
<div class="a" style="left:1295px;top:720px;width:3px;height:1px;background:#000"></div>
<div class="t" style="right:1385px;top:741.54px;font-size:12px;line-height:12px;letter-spacing:0.15px">-<span style="margin-left:1.2px"></span>90.0</div>
<div class="a" style="left:58px;top:747px;width:3px;height:1px;background:#000"></div>
<div class="t " style="left:1300.3px;top:741.54px;font-size:12px;line-height:12px;letter-spacing:0.05px">-<span style="margin-left:1.2px"></span>90.0</div>
<div class="a" style="left:1295px;top:747px;width:3px;height:1px;background:#000"></div>
<div class="t" style="right:1385px;top:768.54px;font-size:12px;line-height:12px;letter-spacing:0.15px">-<span style="margin-left:1.2px"></span>100.0</div>
<div class="a" style="left:58px;top:774px;width:3px;height:1px;background:#000"></div>
<div class="t " style="left:1300.3px;top:768.54px;font-size:12px;line-height:12px;letter-spacing:0.05px">-<span style="margin-left:1.2px"></span>100.0</div>
<div class="a" style="left:1295px;top:774px;width:3px;height:1px;background:#000"></div>
<div class="t" style="right:1385px;top:795.54px;font-size:12px;line-height:12px;letter-spacing:0.15px">-<span style="margin-left:1.2px"></span>110.0</div>
<div class="a" style="left:58px;top:801px;width:3px;height:1px;background:#000"></div>
<div class="t " style="left:1300.3px;top:795.54px;font-size:12px;line-height:12px;letter-spacing:0.05px">-<span style="margin-left:1.2px"></span>110.0</div>
<div class="a" style="left:1295px;top:801px;width:3px;height:1px;background:#000"></div>
<div class="t" style="right:1385px;top:821.54px;font-size:12px;line-height:12px;letter-spacing:0.15px">-<span style="margin-left:1.2px"></span>120.0</div>
<div class="a" style="left:58px;top:827px;width:3px;height:1px;background:#000"></div>
<div class="t " style="left:1300.3px;top:821.54px;font-size:12px;line-height:12px;letter-spacing:0.05px">-<span style="margin-left:1.2px"></span>120.0</div>
<div class="a" style="left:1295px;top:827px;width:3px;height:1px;background:#000"></div>
<div class="t " style="left:60.5px;top:489.24px;font-size:12px;line-height:12px;letter-spacing:0.1px">Pwr =-105.81</div>
<div class="t" style="left:562.7px;width:200px;text-align:center;top:488.74px;font-size:12px;line-height:12px;">RIGHT</div>
<div class="t" style="right:174.5px;top:489.24px;font-size:12px;line-height:12px;letter-spacing:0.1px">PSD: Units^2/Hz</div>
<div class="a" style="left:1275px;top:505px;width:20px;height:323px;background:#505050;border-left:2px solid #4B4A3C;border-right:2px solid #4B4A3C;border-bottom:1px solid #4B4A3C"></div>
<div class="a" style="left:1277px;top:788px;width:16px;height:39px;background:#FFF090"></div>
<div class="t" style="left:-26.6px;top:665.5px;width:80px;height:13px;line-height:13px;font-size:12px;text-align:center;transform:rotate(-90deg);letter-spacing:0.9px">dBV rms</div>
<div class="a" style="left:1275px;top:503px;width:20px;height:2px;background:#A6A395"></div>
<div class="a" style="left:1275px;top:161px;width:20px;height:2px;background:#A6A395"></div>
<div class="a" style="left:61px;top:485px;width:1204px;height:1px;background:#F4F4B8"></div>
<div class="a" style="left:61px;top:486px;width:1206px;height:2px;background:#FFFFF6"></div>
<svg class="a" style="left:0;top:0" width="1440" height="900"><g fill="none" stroke="#FFFFC8" stroke-width="1.2"><path d="M753.5 485L756.5 472L758.5 459L760.5 433L761 400L761.5 391L762.5 329L763.5 233L764.5 178L765.5 233L765.5 329L766 358L766.5 391L766.7 400L767.8 433L769.4 459L771.5 472L774.5 485" stroke-width="1"/><path d="M284.5 485L285 475L286 465L287.5 464.5L289 468L290.5 476L291.5 485"/><path d="M763.5 827V814L764.5 800L765.5 814V827" stroke-width="1"/></g></svg>
<div class="a" style="left:61px;top:826px;width:1204px;height:1px;background:#E2E2A0"></div>
<div class="a" style="left:61px;top:827px;width:1204px;height:17px;background:repeating-conic-gradient(#FBFAF6 0 25%,#E6E4D8 0 50%) 0 0/2px 2px"></div>
<div class="a" style="left:61px;top:828px;width:17px;height:16px;background:#ECE9D8;box-shadow:inset 1px 1px 0 #fff,inset -1px -1px 0 #8A877A,inset -2px -2px 0 #C8C5B8"></div>
<svg class="a" style="left:61px;top:828px" width="17" height="16"><path d="M6 8l4-4v8z" fill="#000"/></svg>
<div class="a" style="left:1231px;top:828px;width:17px;height:16px;background:#ECE9D8;box-shadow:inset 1px 1px 0 #fff,inset -1px -1px 0 #8A877A,inset -2px -2px 0 #C8C5B8"></div>
<div class="a" style="left:1248px;top:828px;width:17px;height:16px;background:#ECE9D8;box-shadow:inset 1px 1px 0 #fff,inset -1px -1px 0 #8A877A,inset -2px -2px 0 #C8C5B8"></div>
<svg class="a" style="left:1248px;top:828px" width="17" height="16"><path d="M11 8l-4-4v8z" fill="#000"/></svg>
<div class="a" style="left:142px;top:844px;width:1px;height:3px;background:#000"></div>
<div class="t" style="left:42.5px;width:200px;text-align:center;top:848.94px;font-size:12px;line-height:12px;letter-spacing:0.3px">20</div>
<div class="a" style="left:206px;top:844px;width:1px;height:3px;background:#000"></div>
<div class="t" style="left:106.5px;width:200px;text-align:center;top:848.94px;font-size:12px;line-height:12px;letter-spacing:0.3px">30</div>
<div class="a" style="left:251px;top:844px;width:1px;height:3px;background:#000"></div>
<div class="t" style="left:151.5px;width:200px;text-align:center;top:848.94px;font-size:12px;line-height:12px;letter-spacing:0.3px">40</div>
<div class="a" style="left:287px;top:844px;width:1px;height:3px;background:#000"></div>
<div class="a" style="left:316px;top:844px;width:1px;height:3px;background:#000"></div>
<div class="t" style="left:216.5px;width:200px;text-align:center;top:848.94px;font-size:12px;line-height:12px;letter-spacing:0.3px">60</div>
<div class="a" style="left:340px;top:844px;width:1px;height:3px;background:#000"></div>
<div class="a" style="left:361px;top:844px;width:1px;height:3px;background:#000"></div>
<div class="t" style="left:261.5px;width:200px;text-align:center;top:848.94px;font-size:12px;line-height:12px;letter-spacing:0.3px">80</div>
<div class="a" style="left:380px;top:844px;width:1px;height:3px;background:#000"></div>
<div class="a" style="left:397px;top:844px;width:1px;height:3px;background:#000"></div>
<div class="t" style="left:297.5px;width:200px;text-align:center;top:848.94px;font-size:12px;line-height:12px;letter-spacing:0.3px">100</div>
<div class="a" style="left:507px;top:844px;width:1px;height:3px;background:#000"></div>
<div class="t" style="left:407.5px;width:200px;text-align:center;top:848.94px;font-size:12px;line-height:12px;letter-spacing:0.3px">200</div>
<div class="a" style="left:571px;top:844px;width:1px;height:3px;background:#000"></div>
<div class="t" style="left:471.5px;width:200px;text-align:center;top:848.94px;font-size:12px;line-height:12px;letter-spacing:0.3px">300</div>
<div class="a" style="left:617px;top:844px;width:1px;height:3px;background:#000"></div>
<div class="t" style="left:517.5px;width:200px;text-align:center;top:848.94px;font-size:12px;line-height:12px;letter-spacing:0.3px">400</div>
<div class="a" style="left:652px;top:844px;width:1px;height:3px;background:#000"></div>
<div class="a" style="left:681px;top:844px;width:1px;height:3px;background:#000"></div>
<div class="t" style="left:581.5px;width:200px;text-align:center;top:848.94px;font-size:12px;line-height:12px;letter-spacing:0.3px">600</div>
<div class="a" style="left:706px;top:844px;width:1px;height:3px;background:#000"></div>
<div class="a" style="left:727px;top:844px;width:1px;height:3px;background:#000"></div>
<div class="t" style="left:627.5px;width:200px;text-align:center;top:848.94px;font-size:12px;line-height:12px;letter-spacing:0.3px">800</div>
<div class="a" style="left:745px;top:844px;width:1px;height:3px;background:#000"></div>
<div class="a" style="left:762px;top:844px;width:1px;height:3px;background:#000"></div>
<div class="t" style="left:662.5px;width:200px;text-align:center;top:848.94px;font-size:12px;line-height:12px;letter-spacing:0.3px">1.0k</div>
<div class="a" style="left:872px;top:844px;width:1px;height:3px;background:#000"></div>
<div class="t" style="left:772.5px;width:200px;text-align:center;top:848.94px;font-size:12px;line-height:12px;letter-spacing:0.3px">2.0k</div>
<div class="a" style="left:936px;top:844px;width:1px;height:3px;background:#000"></div>
<div class="t" style="left:836.5px;width:200px;text-align:center;top:848.94px;font-size:12px;line-height:12px;letter-spacing:0.3px">3.0k</div>
<div class="a" style="left:982px;top:844px;width:1px;height:3px;background:#000"></div>
<div class="t" style="left:882.5px;width:200px;text-align:center;top:848.94px;font-size:12px;line-height:12px;letter-spacing:0.3px">4.0k</div>
<div class="a" style="left:1017px;top:844px;width:1px;height:3px;background:#000"></div>
<div class="a" style="left:1046px;top:844px;width:1px;height:3px;background:#000"></div>
<div class="t" style="left:946.5px;width:200px;text-align:center;top:848.94px;font-size:12px;line-height:12px;letter-spacing:0.3px">6.0k</div>
<div class="a" style="left:1071px;top:844px;width:1px;height:3px;background:#000"></div>
<div class="a" style="left:1092px;top:844px;width:1px;height:3px;background:#000"></div>
<div class="t" style="left:992.5px;width:200px;text-align:center;top:848.94px;font-size:12px;line-height:12px;letter-spacing:0.3px">8.0k</div>
<div class="a" style="left:1111px;top:844px;width:1px;height:3px;background:#000"></div>
<div class="a" style="left:1127px;top:844px;width:1px;height:3px;background:#000"></div>
<div class="t" style="left:1027.5px;width:200px;text-align:center;top:848.94px;font-size:12px;line-height:12px;letter-spacing:0.3px">10.0k</div>
<div class="a" style="left:1237px;top:844px;width:1px;height:3px;background:#000"></div>
<div class="t" style="left:1137.5px;width:200px;text-align:center;top:848.94px;font-size:12px;line-height:12px;letter-spacing:0.3px">20.0k</div>
<div class="t" style="left:620px;width:200px;text-align:center;top:860.64px;font-size:12px;line-height:12px;">Frequency (Hz)</div>
<div class="t " style="left:1275.5px;top:848.94px;font-size:12px;line-height:12px;letter-spacing:0.2px">Pwr</div>
<div class="t " style="left:1369px;top:149.84px;font-size:12px;line-height:12px;letter-spacing:-0.1px"><u>Overlays</u></div>
<div class="t" style="left:1334.2px;top:164.9px;width:30px;height:13px;line-height:13px;font-size:12px;text-align:center;transform:rotate(-90deg)">Set</div>
<div class="t" style="left:1349.7px;top:166.1px;width:30px;height:13px;line-height:13px;font-size:12px;text-align:center;transform:rotate(-90deg)">On</div>
<div class="a" style="left:1342px;top:184px;width:15px;height:14px;background:#ECE9D8;box-shadow:inset -1px -1px 0 #6A685C,inset -2px -2px 0 #A8A598"></div>
<div class="t" style="left:1249px;width:200px;text-align:center;top:185.44px;font-size:12px;line-height:12px;">1</div>
<div class="a" style="left:1359px;top:185px;width:12px;height:12px;background:#fff;box-shadow:inset 1px 1px 0 #6A685C,inset 2px 2px 0 #8A877A"></div>
<div class="t " style="left:1375.5px;top:186.14px;font-size:12px;line-height:12px;color:#108010;letter-spacing:-0.25px">Overlay 1</div>
<div class="a" style="left:1342px;top:200px;width:15px;height:14px;background:#ECE9D8;box-shadow:inset -1px -1px 0 #6A685C,inset -2px -2px 0 #A8A598"></div>
<div class="t" style="left:1249px;width:200px;text-align:center;top:201.44px;font-size:12px;line-height:12px;">2</div>
<div class="a" style="left:1359px;top:201px;width:12px;height:12px;background:#fff;box-shadow:inset 1px 1px 0 #6A685C,inset 2px 2px 0 #8A877A"></div>
<div class="t " style="left:1375.5px;top:202.14px;font-size:12px;line-height:12px;color:#10B0B8;letter-spacing:-0.25px">Overlay 2</div>
<div class="a" style="left:1342px;top:216px;width:15px;height:14px;background:#ECE9D8;box-shadow:inset -1px -1px 0 #6A685C,inset -2px -2px 0 #A8A598"></div>
<div class="t" style="left:1249px;width:200px;text-align:center;top:217.44px;font-size:12px;line-height:12px;">3</div>
<div class="a" style="left:1359px;top:217px;width:12px;height:12px;background:#fff;box-shadow:inset 1px 1px 0 #6A685C,inset 2px 2px 0 #8A877A"></div>
<div class="t " style="left:1375.5px;top:218.14px;font-size:12px;line-height:12px;color:#801080;letter-spacing:-0.25px">Overlay 3</div>
<div class="a" style="left:1342px;top:232px;width:15px;height:14px;background:#ECE9D8;box-shadow:inset -1px -1px 0 #6A685C,inset -2px -2px 0 #A8A598"></div>
<div class="t" style="left:1249px;width:200px;text-align:center;top:233.44px;font-size:12px;line-height:12px;">4</div>
<div class="a" style="left:1359px;top:233px;width:12px;height:12px;background:#fff;box-shadow:inset 1px 1px 0 #6A685C,inset 2px 2px 0 #8A877A"></div>
<div class="t " style="left:1375.5px;top:234.14px;font-size:12px;line-height:12px;color:#D828E0;letter-spacing:-0.25px">Overlay 4</div>
<div class="a" style="left:1342px;top:248px;width:15px;height:14px;background:#ECE9D8;box-shadow:inset -1px -1px 0 #6A685C,inset -2px -2px 0 #A8A598"></div>
<div class="t" style="left:1249px;width:200px;text-align:center;top:249.44px;font-size:12px;line-height:12px;">5</div>
<div class="a" style="left:1359px;top:249px;width:12px;height:12px;background:#fff;box-shadow:inset 1px 1px 0 #6A685C,inset 2px 2px 0 #8A877A"></div>
<div class="t " style="left:1375.5px;top:250.14px;font-size:12px;line-height:12px;color:#806030;letter-spacing:-0.25px">Overlay 5</div>
<div class="a" style="left:1342px;top:264px;width:15px;height:14px;background:#ECE9D8;box-shadow:inset -1px -1px 0 #6A685C,inset -2px -2px 0 #A8A598"></div>
<div class="t" style="left:1249px;width:200px;text-align:center;top:265.44px;font-size:12px;line-height:12px;">6</div>
<div class="a" style="left:1359px;top:265px;width:12px;height:12px;background:#fff;box-shadow:inset 1px 1px 0 #6A685C,inset 2px 2px 0 #8A877A"></div>
<div class="t " style="left:1375.5px;top:266.14px;font-size:12px;line-height:12px;color:#F89868;letter-spacing:-0.25px">Overlay 6</div>
<div class="a" style="left:1342px;top:280px;width:15px;height:14px;background:#ECE9D8;box-shadow:inset -1px -1px 0 #6A685C,inset -2px -2px 0 #A8A598"></div>
<div class="t" style="left:1249px;width:200px;text-align:center;top:281.44px;font-size:12px;line-height:12px;">C</div>
<div class="a" style="left:1359px;top:281px;width:12px;height:12px;background:#fff;box-shadow:inset 1px 1px 0 #6A685C,inset 2px 2px 0 #8A877A"></div>
<div class="t " style="left:1375.5px;top:282.14px;font-size:12px;line-height:12px;letter-spacing:0.4px">Composite</div>
<div class="a" style="left:1339px;top:297px;width:64px;height:18px;background:#ECE9D8;box-shadow:inset 1px 1px 0 #fff,inset -1px -1px 0 #716F64,inset -2px -2px 0 #ACA899"></div>
<div class="t " style="left:1345.5px;top:299.84px;font-size:12px;line-height:12px;letter-spacing:0.2px">Options...</div>
<div class="t" style="left:1334.2px;top:506.9px;width:30px;height:13px;line-height:13px;font-size:12px;text-align:center;transform:rotate(-90deg)">Set</div>
<div class="t" style="left:1349.7px;top:508.1px;width:30px;height:13px;line-height:13px;font-size:12px;text-align:center;transform:rotate(-90deg)">On</div>
<div class="a" style="left:1342px;top:526px;width:15px;height:14px;background:#ECE9D8;box-shadow:inset -1px -1px 0 #6A685C,inset -2px -2px 0 #A8A598"></div>
<div class="t" style="left:1249px;width:200px;text-align:center;top:527.44px;font-size:12px;line-height:12px;">1</div>
<div class="a" style="left:1359px;top:527px;width:12px;height:12px;background:#fff;box-shadow:inset 1px 1px 0 #6A685C,inset 2px 2px 0 #8A877A"></div>
<div class="t " style="left:1375.5px;top:528.14px;font-size:12px;line-height:12px;color:#108010;letter-spacing:-0.25px">Overlay 1</div>
<div class="a" style="left:1342px;top:542px;width:15px;height:14px;background:#ECE9D8;box-shadow:inset -1px -1px 0 #6A685C,inset -2px -2px 0 #A8A598"></div>
<div class="t" style="left:1249px;width:200px;text-align:center;top:543.44px;font-size:12px;line-height:12px;">2</div>
<div class="a" style="left:1359px;top:543px;width:12px;height:12px;background:#fff;box-shadow:inset 1px 1px 0 #6A685C,inset 2px 2px 0 #8A877A"></div>
<div class="t " style="left:1375.5px;top:544.14px;font-size:12px;line-height:12px;color:#10B0B8;letter-spacing:-0.25px">Overlay 2</div>
<div class="a" style="left:1342px;top:558px;width:15px;height:14px;background:#ECE9D8;box-shadow:inset -1px -1px 0 #6A685C,inset -2px -2px 0 #A8A598"></div>
<div class="t" style="left:1249px;width:200px;text-align:center;top:559.44px;font-size:12px;line-height:12px;">3</div>
<div class="a" style="left:1359px;top:559px;width:12px;height:12px;background:#fff;box-shadow:inset 1px 1px 0 #6A685C,inset 2px 2px 0 #8A877A"></div>
<div class="t " style="left:1375.5px;top:560.14px;font-size:12px;line-height:12px;color:#801080;letter-spacing:-0.25px">Overlay 3</div>
<div class="a" style="left:1342px;top:574px;width:15px;height:14px;background:#ECE9D8;box-shadow:inset -1px -1px 0 #6A685C,inset -2px -2px 0 #A8A598"></div>
<div class="t" style="left:1249px;width:200px;text-align:center;top:575.44px;font-size:12px;line-height:12px;">4</div>
<div class="a" style="left:1359px;top:575px;width:12px;height:12px;background:#fff;box-shadow:inset 1px 1px 0 #6A685C,inset 2px 2px 0 #8A877A"></div>
<div class="t " style="left:1375.5px;top:576.14px;font-size:12px;line-height:12px;color:#D828E0;letter-spacing:-0.25px">Overlay 4</div>
<div class="a" style="left:1342px;top:590px;width:15px;height:14px;background:#ECE9D8;box-shadow:inset -1px -1px 0 #6A685C,inset -2px -2px 0 #A8A598"></div>
<div class="t" style="left:1249px;width:200px;text-align:center;top:591.44px;font-size:12px;line-height:12px;">5</div>
<div class="a" style="left:1359px;top:591px;width:12px;height:12px;background:#fff;box-shadow:inset 1px 1px 0 #6A685C,inset 2px 2px 0 #8A877A"></div>
<div class="t " style="left:1375.5px;top:592.14px;font-size:12px;line-height:12px;color:#806030;letter-spacing:-0.25px">Overlay 5</div>
<div class="a" style="left:1342px;top:606px;width:15px;height:14px;background:#ECE9D8;box-shadow:inset -1px -1px 0 #6A685C,inset -2px -2px 0 #A8A598"></div>
<div class="t" style="left:1249px;width:200px;text-align:center;top:607.44px;font-size:12px;line-height:12px;">6</div>
<div class="a" style="left:1359px;top:607px;width:12px;height:12px;background:#fff;box-shadow:inset 1px 1px 0 #6A685C,inset 2px 2px 0 #8A877A"></div>
<div class="t " style="left:1375.5px;top:608.14px;font-size:12px;line-height:12px;color:#F89868;letter-spacing:-0.25px">Overlay 6</div>
<div class="a" style="left:1342px;top:622px;width:15px;height:14px;background:#ECE9D8;box-shadow:inset -1px -1px 0 #6A685C,inset -2px -2px 0 #A8A598"></div>
<div class="t" style="left:1249px;width:200px;text-align:center;top:623.44px;font-size:12px;line-height:12px;">C</div>
<div class="a" style="left:1359px;top:623px;width:12px;height:12px;background:#fff;box-shadow:inset 1px 1px 0 #6A685C,inset 2px 2px 0 #8A877A"></div>
<div class="t " style="left:1375.5px;top:624.14px;font-size:12px;line-height:12px;letter-spacing:0.4px">Composite</div>
<div class="a" style="left:1339px;top:639px;width:64px;height:18px;background:#ECE9D8;box-shadow:inset 1px 1px 0 #fff,inset -1px -1px 0 #716F64,inset -2px -2px 0 #ACA899"></div>
<div class="t " style="left:1345.5px;top:641.84px;font-size:12px;line-height:12px;letter-spacing:0.2px">Options...</div>
<div class="a" style="left:0px;top:874px;width:1440px;height:1px;background:#000"></div>
<div class="a" style="left:0px;top:875px;width:1440px;height:1px;background:#fff"></div>
<div class="a" style="left:4px;top:878px;width:118px;height:17px;border-top:1px solid #ACA899;border-left:1px solid #ACA899;border-bottom:1px solid #fff;border-right:1px solid #fff"></div>
<div class="t " style="left:7px;top:881.04px;font-size:12px;line-height:12px;letter-spacing:0.35px">Running...</div>
<div class="a" style="left:124px;top:878px;width:102px;height:17px;border-top:1px solid #ACA899;border-left:1px solid #ACA899;border-bottom:1px solid #fff;border-right:1px solid #fff"></div>
<div class="t " style="left:127px;top:881.04px;font-size:12px;line-height:12px;letter-spacing:0.35px">Real Time</div>
<div class="a" style="left:228px;top:878px;width:70px;height:17px;border-top:1px solid #ACA899;border-left:1px solid #ACA899;border-bottom:1px solid #fff;border-right:1px solid #fff"></div>
<div class="t " style="left:231px;top:881.04px;font-size:12px;line-height:12px;letter-spacing:0.35px">48000 Hz</div>
<div class="a" style="left:301px;top:878px;width:51px;height:17px;border-top:1px solid #ACA899;border-left:1px solid #ACA899;border-bottom:1px solid #fff;border-right:1px solid #fff"></div>
<div class="t " style="left:304px;top:881.04px;font-size:12px;line-height:12px;letter-spacing:0.35px">24 Bit</div>
<div class="a" style="left:354px;top:878px;width:60px;height:17px;border-top:1px solid #ACA899;border-left:1px solid #ACA899;border-bottom:1px solid #fff;border-right:1px solid #fff"></div>
<div class="t " style="left:357px;top:881.04px;font-size:12px;line-height:12px;letter-spacing:0.35px">Stereo</div>
<div class="a" style="left:417px;top:878px;width:100px;height:17px;border-top:1px solid #ACA899;border-left:1px solid #ACA899;border-bottom:1px solid #fff;border-right:1px solid #fff"></div>
<div class="t " style="left:420px;top:881.04px;font-size:12px;line-height:12px;letter-spacing:0.35px">FFT 65536 pts</div>
<div class="a" style="left:519px;top:878px;width:72px;height:17px;border-top:1px solid #ACA899;border-left:1px solid #ACA899;border-bottom:1px solid #fff;border-right:1px solid #fff"></div>
<div class="t " style="left:522px;top:881.04px;font-size:12px;line-height:12px;letter-spacing:0.35px">Hanning</div>
<div class="a" style="left:594px;top:878px;width:843px;height:17px;border-top:1px solid #ACA899;border-left:1px solid #ACA899;border-bottom:1px solid #fff;border-right:1px solid #fff"></div>
<div class="a" style="left:596px;top:880px;width:774px;height:6px;background:linear-gradient(90deg,rgb(34, 230, 34) 0px,rgb(60, 225, 30) 204px,rgb(130, 208, 20) 404px,rgb(185, 195, 20) 554px,rgb(215, 180, 30) 704px,rgb(232, 162, 42) 774px)"></div>
<div class="a" style="left:596px;top:880px;width:774px;height:6px;background:repeating-linear-gradient(90deg,transparent 0 3px,rgba(0,0,0,0.28) 3px 4px)"></div>
<div class="a" style="left:596px;top:887px;width:210px;height:6px;background:#22E622"></div>
<div class="a" style="left:596px;top:887px;width:210px;height:6px;background:repeating-linear-gradient(90deg,transparent 0 3px,rgba(0,0,0,0.28) 3px 4px)"></div>
<div class="a" style="left:0px;top:898px;width:1440px;height:2px;background:#3A72D8"></div>
<div class="a" style="left:396px;top:3px;width:256px;height:127px;background:#6F82DF;border-radius:6px 6px 0 0"></div>
<div class="a" style="left:397px;top:4px;width:254px;height:28px;border-radius:5px 5px 0 0;background:linear-gradient(#A4B8F4 0px,#A4B8F4 1px,#78A0DE 3px,#7890E0 6px,#7894E0 16px,#7C9CE6 21px,#86A8EE 25px,#84A4EC 26px,#6E84D8 28px)"></div>
<div class="a" style="left:400px;top:32px;width:248px;height:94px;background:#ECE9D8;border-top:1px solid #F2F2EC"></div>
<svg class="a" style="left:402px;top:9px" width="16" height="16"><rect x="0.6" y="0.6" width="14.8" height="14.8" fill="#fff" stroke="#000010" stroke-width="1.2"/><path d="M2.1 8.3L5.4 5.4V10L10.4 5.4V10L13.5 7.5" stroke="#404848" stroke-width="1" fill="none"/></svg>
<div class="t " style="left:421.6px;top:12.30px;font-size:13px;line-height:13px;color:#DCE6FA;font-weight:bold">Total Pwr</div>
<div class="a" style="left:625px;top:8px;width:21px;height:21px;border-radius:3px;border:1px solid #C8B4E8;background:linear-gradient(135deg,#D48A9E,#C06A80 50%,#B8607A)"></div>
<svg class="a" style="left:625px;top:8px" width="21" height="21"><path d="M6 6L15 15M15 6L6 15" stroke="#fff" stroke-width="2"/></svg>
<div class="t" style="left:421.51px;top:35.74px;font-size:40px;line-height:40px;transform-origin:0 33.86px;transform:scale(0.7968,1.0200);letter-spacing:0px;-webkit-text-stroke:0.6px #000">-4.68 dBV rms</div>
<div class="t" style="left:403.40px;top:79.14px;font-size:40px;line-height:40px;transform-origin:0 33.86px;transform:scale(0.7997,1.0200);letter-spacing:0px;-webkit-text-stroke:0.6px #000">-<span class=one>1</span>05.44 dBV rms</div>
<div class="a" style="left:651px;top:3px;width:256px;height:127px;background:#6F82DF;border-radius:6px 6px 0 0"></div>
<div class="a" style="left:652px;top:4px;width:254px;height:28px;border-radius:5px 5px 0 0;background:linear-gradient(#A4B8F4 0px,#A4B8F4 1px,#78A0DE 3px,#7890E0 6px,#7894E0 16px,#7C9CE6 21px,#86A8EE 25px,#84A4EC 26px,#6E84D8 28px)"></div>
<div class="a" style="left:655px;top:32px;width:248px;height:94px;background:#ECE9D8;border-top:1px solid #F2F2EC"></div>
<svg class="a" style="left:657px;top:9px" width="16" height="16"><rect x="0.6" y="0.6" width="14.8" height="14.8" fill="#fff" stroke="#000010" stroke-width="1.2"/><path d="M2.1 8.3L5.4 5.4V10L10.4 5.4V10L13.5 7.5" stroke="#404848" stroke-width="1" fill="none"/></svg>
<div class="t " style="left:676.6px;top:12.30px;font-size:13px;line-height:13px;color:#DCE6FA;font-weight:bold">Peak Amplitude</div>
<div class="a" style="left:880px;top:8px;width:21px;height:21px;border-radius:3px;border:1px solid #C8B4E8;background:linear-gradient(135deg,#D48A9E,#C06A80 50%,#B8607A)"></div>
<svg class="a" style="left:880px;top:8px" width="21" height="21"><path d="M6 6L15 15M15 6L6 15" stroke="#fff" stroke-width="2"/></svg>
<div class="t" style="left:676.51px;top:35.74px;font-size:40px;line-height:40px;transform-origin:0 33.86px;transform:scale(0.7968,1.0200);letter-spacing:0px;-webkit-text-stroke:0.6px #000">-5.33 dBV rms</div>
<div class="t" style="left:658.40px;top:79.14px;font-size:40px;line-height:40px;transform-origin:0 33.86px;transform:scale(0.7997,1.0200);letter-spacing:0px;-webkit-text-stroke:0.6px #000">-<span class=one>1</span>09.40 dBV rms</div>
<div class="a" style="left:907px;top:3px;width:256px;height:127px;background:#6F82DF;border-radius:6px 6px 0 0"></div>
<div class="a" style="left:908px;top:4px;width:254px;height:28px;border-radius:5px 5px 0 0;background:linear-gradient(#A4B8F4 0px,#A4B8F4 1px,#78A0DE 3px,#7890E0 6px,#7894E0 16px,#7C9CE6 21px,#86A8EE 25px,#84A4EC 26px,#6E84D8 28px)"></div>
<div class="a" style="left:911px;top:32px;width:248px;height:94px;background:#ECE9D8;border-top:1px solid #F2F2EC"></div>
<svg class="a" style="left:913px;top:9px" width="16" height="16"><rect x="0.6" y="0.6" width="14.8" height="14.8" fill="#fff" stroke="#000010" stroke-width="1.2"/><path d="M2.1 8.3L5.4 5.4V10L10.4 5.4V10L13.5 7.5" stroke="#404848" stroke-width="1" fill="none"/></svg>
<div class="t " style="left:932.6px;top:12.30px;font-size:13px;line-height:13px;color:#DCE6FA;font-weight:bold">Peak Frequency</div>
<div class="a" style="left:1136px;top:8px;width:21px;height:21px;border-radius:3px;border:1px solid #C8B4E8;background:linear-gradient(135deg,#D48A9E,#C06A80 50%,#B8607A)"></div>
<svg class="a" style="left:1136px;top:8px" width="21" height="21"><path d="M6 6L15 15M15 6L6 15" stroke="#fff" stroke-width="2"/></svg>
<div class="t" style="left:920.11px;top:35.14px;font-size:40px;line-height:40px;transform-origin:0 33.86px;transform:scale(1.0300,1.0200);letter-spacing:2.03px;-webkit-text-stroke:0.6px #000"><span class=one>1</span>004.88 Hz</div>
<div class="t" style="left:920.11px;top:78.64px;font-size:40px;line-height:40px;transform-origin:0 33.86px;transform:scale(1.0300,1.0200);letter-spacing:2.03px;-webkit-text-stroke:0.6px #000"><span class=one>1</span>004.88 Hz</div>
<div class="a" style="left:1162px;top:3px;width:208px;height:127px;background:#6F82DF;border-radius:6px 6px 0 0"></div>
<div class="a" style="left:1163px;top:4px;width:206px;height:28px;border-radius:5px 5px 0 0;background:linear-gradient(#A4B8F4 0px,#A4B8F4 1px,#78A0DE 3px,#7890E0 6px,#7894E0 16px,#7C9CE6 21px,#86A8EE 25px,#84A4EC 26px,#6E84D8 28px)"></div>
<div class="a" style="left:1166px;top:32px;width:200px;height:94px;background:#ECE9D8;border-top:1px solid #F2F2EC"></div>
<svg class="a" style="left:1168px;top:9px" width="16" height="16"><rect x="0.6" y="0.6" width="14.8" height="14.8" fill="#fff" stroke="#000010" stroke-width="1.2"/><path d="M2.1 8.3L5.4 5.4V10L10.4 5.4V10L13.5 7.5" stroke="#404848" stroke-width="1" fill="none"/></svg>
<div class="t " style="left:1187.6px;top:12.30px;font-size:13px;line-height:13px;color:#DCE6FA;font-weight:bold">THD</div>
<div class="a" style="left:1343px;top:8px;width:21px;height:21px;border-radius:3px;border:1px solid #C8B4E8;background:linear-gradient(135deg,#D48A9E,#C06A80 50%,#B8607A)"></div>
<svg class="a" style="left:1343px;top:8px" width="21" height="21"><path d="M6 6L15 15M15 6L6 15" stroke="#fff" stroke-width="2"/></svg>
<div class="t" style="left:1170.70px;top:34.74px;font-size:40px;line-height:40px;transform-origin:0 33.86px;transform:scale(0.9000,1.0200);letter-spacing:2.49px;-webkit-text-stroke:0.6px #000">0.000<span class=one>1</span>0 %</div>
<div class="t" style="left:1170.20px;top:77.74px;font-size:40px;line-height:40px;transform-origin:0 33.86px;transform:scale(0.9000,1.0200);letter-spacing:2.49px;-webkit-text-stroke:0.6px #000">6.90828 %</div>
</body></html>
